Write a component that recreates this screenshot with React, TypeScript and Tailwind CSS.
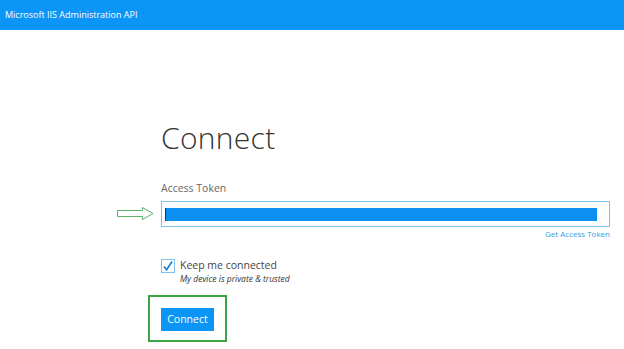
import { useState } from "react";

const font = { fontFamily: '"Open Sans", "Liberation Sans", sans-serif' };

const App = () => {
  const [keep, setKeep] = useState(true);

  return (
    <div className="h-[349px] w-[624px] overflow-hidden bg-white" style={font}>
      <div className="flex h-[30px] items-center bg-[#0b95f7] pl-[5px] text-[9px] text-white">
        Microsoft IIS Administration API
      </div>

      <div className="ml-[161px] w-[449px] pt-[88px]">
        <h1 className="text-[30px] font-light leading-[40px] tracking-[0.3px] text-[#333]">
          Connect
        </h1>

        <div className="mt-[23px] text-[10.5px] leading-[14px] text-[#666]">
          Access Token
        </div>

        <div className="relative mt-[6px]">
          {/* annotation arrow */}
          <svg
            className="absolute left-[-44px] top-[6px]"
            width="37"
            height="13"
            viewBox="0 0 37 13"
          >
            <path
              d="M0.5 3.5 H25.5 V0.5 L36 6.5 L25.5 12.5 V9.5 H0.5 Z"
              fill="white"
              stroke="#5bb36a"
              strokeWidth="1"
            />
          </svg>

          <div className="flex h-[26px] items-center border border-[#7cc0ee] pl-[3px] pr-[12px]">
            <div className="h-[13px] w-[1px] bg-[#333]" />
            <div className="h-[13px] flex-1 bg-[#0b8ff0]" />
          </div>
        </div>

        <div className="mt-[1px] text-right text-[8px] leading-[12px] text-[#3a9ae0]">
          Get Access Token
        </div>

        <div className="mt-[18px] flex items-start gap-[5px]">
          <button
            onClick={() => setKeep(!keep)}
            className="mt-[1px] flex h-[14px] w-[14px] items-center justify-center border border-[#7cc0ee] bg-white"
          >
            {keep && (
              <svg width="12" height="12" viewBox="0 0 12 12">
                <path
                  d="M2 6.5 L4.6 9.8 L10 1.5"
                  fill="none"
                  stroke="#1a7fd8"
                  strokeWidth="1.6"
                />
              </svg>
            )}
          </button>
          <div>
            <div className="text-[10.5px] leading-[14px] text-[#444]">
              Keep me connected
            </div>
            <div className="mt-[1px] text-[8.5px] italic leading-[11px] text-[#333]">
              My device is private &amp; trusted
            </div>
          </div>
        </div>

        <div className="-ml-[13px] mt-[11px] inline-block border-2 border-[#3aa445] px-[11px] pb-[9px] pt-[8px]">
          <button className="h-[23px] w-[53px] bg-[#0b95f7] text-[10.5px] text-white">
            Connect
          </button>
        </div>
      </div>
    </div>
  );
};

export default App;
